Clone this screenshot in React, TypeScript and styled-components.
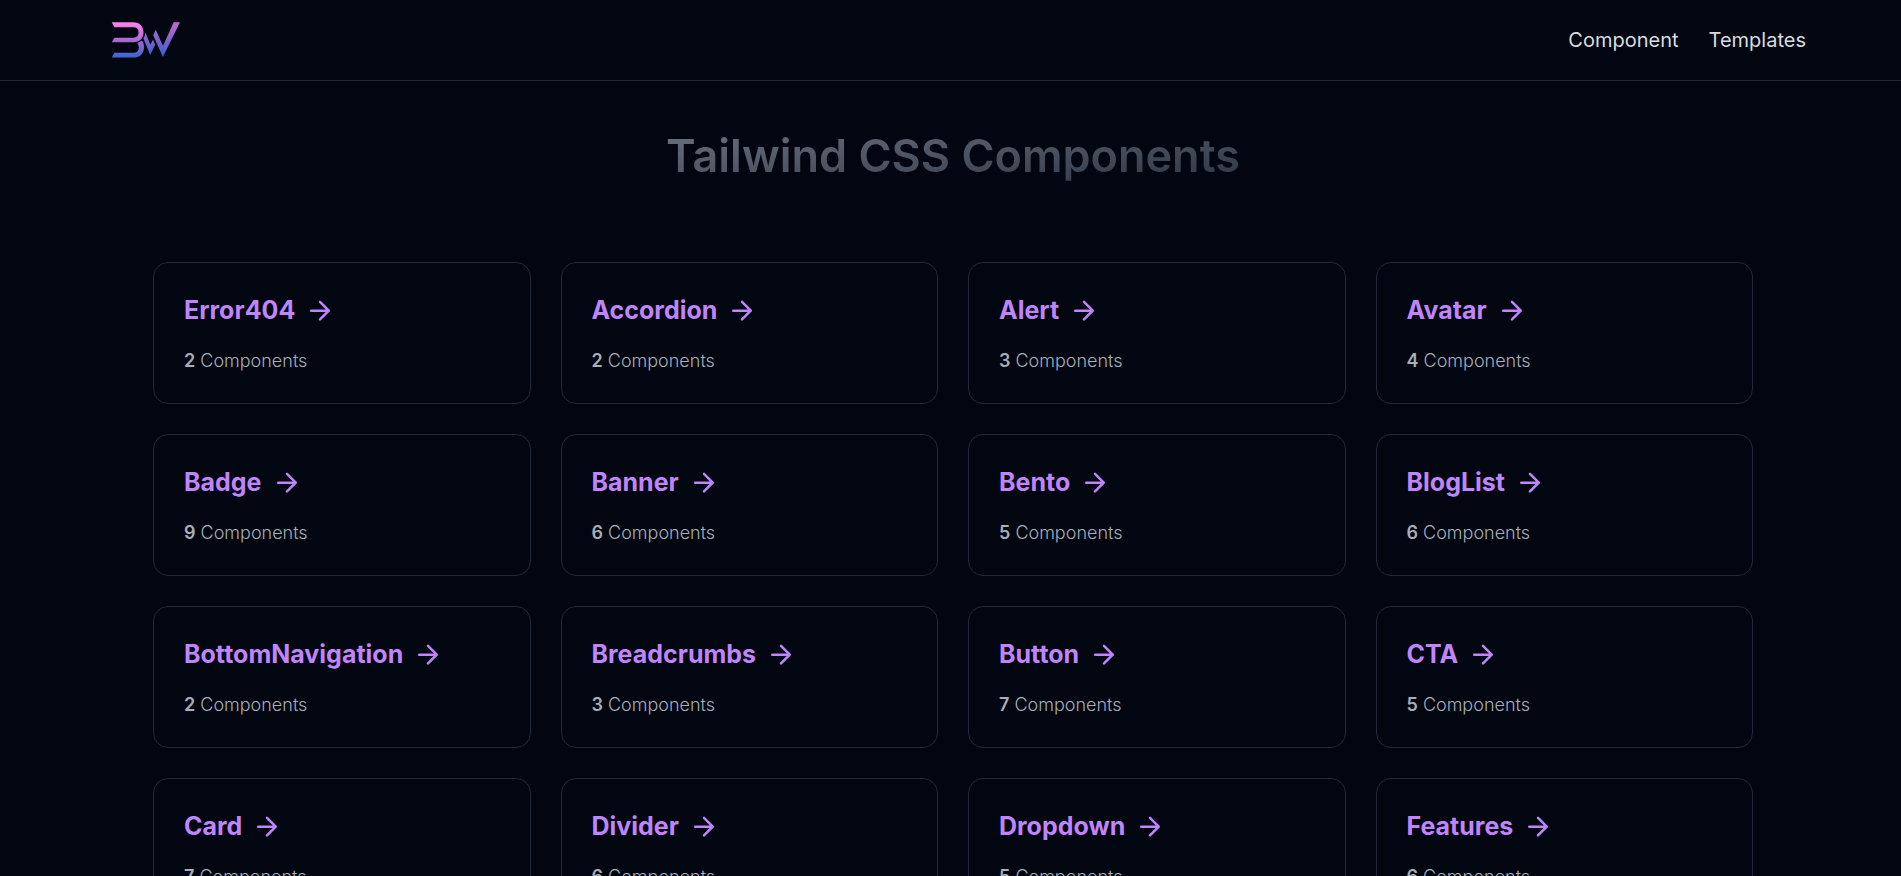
import React from "react";
import styled, { createGlobalStyle } from "styled-components";

const GlobalStyle = createGlobalStyle`
  *, *::before, *::after { box-sizing: border-box; }
  body {
    margin: 0;
    background: #020610;
    color: #e5e7eb;
    font-family: Inter, "Liberation Sans", sans-serif;
  }
  html { overflow-x: hidden; scrollbar-width: none; }
  h1, h2, p, ul { margin: 0; padding: 0; }
`;

const Header = styled.header`
  display: flex;
  align-items: center;
  justify-content: space-between;
  height: 81px;
  padding: 0 5%;
  border-bottom: 1px solid #1f2937;
`;

const LogoLink = styled.a`
  display: flex;
  padding-left: 16px;
`;

const Nav = styled.nav`
  display: flex;
  gap: 30px;
`;

const NavLink = styled.a`
  color: #d9dce1;
  font-size: 20px;
  line-height: 28px;
  text-decoration: none;
`;

const Main = styled.main`
  display: flex;
  flex-direction: column;
  align-items: center;
  padding: 43px 0 60px 5px;
`;

const Title = styled.h1`
  padding: 0 2px;
  font-size: 45px;
  line-height: 64px;
  font-weight: 600;
  color: transparent;
  background: linear-gradient(to bottom right, #6b7280, #2a3442);
  background-clip: text;
  -webkit-background-clip: text;
`;

const Grid = styled.ul`
  display: grid;
  grid-template-columns: repeat(4, minmax(0, 1fr));
  gap: 30px;
  width: 100%;
  max-width: 1600px;
  margin-top: 74px;
  list-style: none;

  @media (max-width: 1200px) {
    grid-template-columns: repeat(2, minmax(0, 1fr));
    padding: 0 30px;
  }
`;

const Card = styled.a`
  display: flex;
  flex-direction: column;
  gap: 22px;
  padding: 30px;
  border: 1px solid #1f2937;
  border-radius: 15px;
  text-decoration: none;
`;

const CardHeading = styled.h2`
  display: flex;
  align-items: center;
  gap: 10px;
  color: #c084fc;
  font-size: 25px;
  line-height: 34px;
  font-weight: 700;
`;

const CardCount = styled.p`
  color: #a6aeba;
  font-size: 18px;
  line-height: 24px;
  font-weight: 300;
`;

const CountNumber = styled.span`
  font-weight: 600;
`;

const categories: { name: string; count: number }[] = [
  { name: "Error404", count: 2 },
  { name: "Accordion", count: 2 },
  { name: "Alert", count: 3 },
  { name: "Avatar", count: 4 },
  { name: "Badge", count: 9 },
  { name: "Banner", count: 6 },
  { name: "Bento", count: 5 },
  { name: "BlogList", count: 6 },
  { name: "BottomNavigation", count: 2 },
  { name: "Breadcrumbs", count: 3 },
  { name: "Button", count: 7 },
  { name: "CTA", count: 5 },
  { name: "Card", count: 7 },
  { name: "Divider", count: 6 },
  { name: "Dropdown", count: 5 },
  { name: "Features", count: 6 },
];

function Logo() {
  return (
    <svg width="70" height="38" viewBox="0 0 70 38" role="img" aria-label="BW">
      <defs>
        <linearGradient id="bw" gradientUnits="userSpaceOnUse" x1="0" y1="3" x2="0" y2="36">
          <stop offset="0" stopColor="#f97fec" />
          <stop offset="0.5" stopColor="#a868d2" />
          <stop offset="1" stopColor="#3a63d6" />
        </linearGradient>
        <linearGradient id="bw-w" gradientUnits="userSpaceOnUse" x1="0" y1="1" x2="0" y2="36">
          <stop offset="0" stopColor="#c46ad2" />
          <stop offset="0.5" stopColor="#8062c8" />
          <stop offset="1" stopColor="#2f62d2" />
        </linearGradient>
      </defs>
      <g fill="url(#bw)">
        <path d="M0.700 1.300H22.500C28.500 1.300 32.500 5.300 32.500 11.500C32.500 17.500 28.500 21.300 22.500 21.300H0.700L3.400 16.700H22.500C25.700 16.700 27.600 14.800 27.600 11.500C27.600 8 25.700 6.200 22.500 6.200H3.400Z" />
        <path d="M26 22C28 21.500 29.500 20.700 31 19.500C32.400 21.500 33 23.500 33 26C33 32.500 29 36.600 23 36.600H0.700L3.400 31.800H22.500C26 31.800 27.800 30 27.800 26.500C27.800 24.500 27.300 23 26 22Z" />
      </g>
      <g fill="url(#bw-w)">
        <path d="M34.300 11.300L39.300 23.500L42 18.700L44.300 23.700L39.200 34L32.400 17.500C33.600 15.500 34.300 13.500 34.300 11.300Z" />
        <path d="M44.700 8.700L52 24.700L62.700 1.300H69L51.900 36L42.200 14.300Z" />
      </g>
    </svg>
  );
}

function ArrowRight() {
  return (
    <svg width="30" height="30" viewBox="0 0 24 24" fill="none" stroke="currentColor" strokeWidth="2" strokeLinecap="round" strokeLinejoin="round" aria-hidden="true">
      <path d="M5 12.500h14M12 5.500l7 7-7 7" />
    </svg>
  );
}

export default function App() {
  return (
    <>
      <GlobalStyle />
      <Header>
        <LogoLink href="#home"><Logo /></LogoLink>
        <Nav>
          <NavLink href="#component">Component</NavLink>
          <NavLink href="#templates">Templates</NavLink>
        </Nav>
      </Header>
      <Main>
        <Title>Tailwind CSS Components</Title>
        <Grid>
          {categories.map(({ name, count }) => (
            <li key={name}>
              <Card href={`#${name}`}>
                <CardHeading>{name}<ArrowRight /></CardHeading>
                <CardCount><CountNumber>{count}</CountNumber> Components</CardCount>
              </Card>
            </li>
          ))}
        </Grid>
      </Main>
    </>
  );
}
